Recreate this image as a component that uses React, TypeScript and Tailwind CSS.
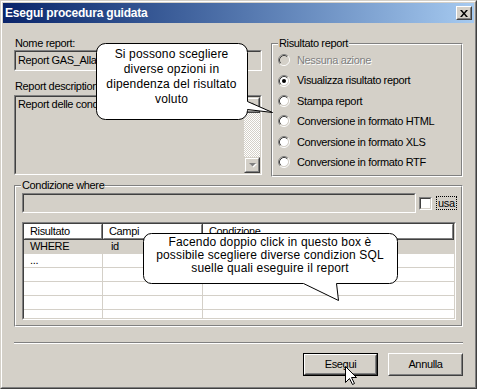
import React from 'react';

function Radio({ checked, disabled }: { checked?: boolean; disabled?: boolean }) {
  return (
    <svg width="12" height="12" viewBox="0 0 12 12" className="shrink-0">
      <circle cx="6" cy="6" r="4.2" fill={disabled ? '#d4d0c8' : '#ffffff'} />
      <path d="M2.11 9.89A5.5 5.5 0 0 1 9.89 2.11" fill="none" stroke="#808080" />
      <path d="M9.89 2.11A5.5 5.5 0 0 1 2.11 9.89" fill="none" stroke="#ffffff" />
      <path d="M2.82 9.18A4.5 4.5 0 0 1 9.18 2.82" fill="none" stroke="#404040" />
      <path d="M9.18 2.82A4.5 4.5 0 0 1 2.82 9.18" fill="none" stroke="#d4d0c8" />
      {checked && <circle cx="6" cy="6" r="2" fill="#000000" />}
    </svg>
  );
}

function ScrollArrow({ up }: { up?: boolean }) {
  return (
    <div className="h-[16px] w-[16px] border border-t-[#d4d0c8] border-l-[#d4d0c8] border-b-[#404040] border-r-[#404040]">
      <div className="flex h-full w-full items-center justify-center border border-t-white border-l-white border-b-[#808080] border-r-[#808080] bg-[#d4d0c8]">
        <svg width="9" height="6" viewBox="0 0 9 6">
          {up ? (
            <>
              <path d="M2 5h7L5.5 1.5z" fill="#ffffff" />
              <path d="M1 4h7L4.5 0.5z" fill="#808080" />
            </>
          ) : (
            <>
              <path d="M2 2h7L5.5 5.5z" fill="#ffffff" />
              <path d="M1 1h7L4.5 4.5z" fill="#808080" />
            </>
          )}
        </svg>
      </div>
    </div>
  );
}

function GroupBox({ title, className, children }: { title: string; className: string; children: React.ReactNode }) {
  return (
    <div className={`relative border border-t-[#808080] border-l-[#808080] border-b-white border-r-white ${className}`}>
      <div className="h-full w-full border border-t-white border-l-white border-b-[#808080] border-r-[#808080]">
        {children}
      </div>
      <span className="absolute left-[6px] top-[-7px] bg-[#d4d0c8] px-[1px] leading-[13px]">{title}</span>
    </div>
  );
}

function Button({ label, isDefault }: { label: string; isDefault?: boolean }) {
  return (
    <div className={`h-[23px] w-[75px] ${isDefault ? 'border border-black' : ''}`}>
      <div className="h-full w-full border border-t-white border-l-white border-b-[#404040] border-r-[#404040]">
        <div className="flex h-full w-full items-center justify-center border border-t-[#d4d0c8] border-l-[#d4d0c8] border-b-[#808080] border-r-[#808080]">
          {label}
        </div>
      </div>
    </div>
  );
}

function HeaderCell({ label, w }: { label: string; w: string }) {
  return (
    <div className={`h-[16px] ${w} border-b border-r border-b-[#404040] border-r-[#404040]`}>
      <div className="h-full w-full border border-t-white border-l-white border-b-[#808080] border-r-[#808080] pl-[5px] leading-[13px]">
        {label}
      </div>
    </div>
  );
}

const rows = [
  { a: 'WHERE', b: 'id', c: '', gray: true },
  { a: '...', b: '', c: '' },
  { a: '', b: '', c: '' },
  { a: '', b: '', c: '' },
  { a: '', b: '', c: '' },
  { a: '', b: '', c: '' },
];

const options = [
  { label: 'Nessuna azione', disabled: true },
  { label: 'Visualizza risultato report', checked: true },
  { label: 'Stampa report' },
  { label: 'Conversione in formato HTML' },
  { label: 'Conversione in formato XLS' },
  { label: 'Conversione in formato RTF' },
];

export default function App() {
  return (
    <div className="relative h-[389px] w-[477px] overflow-hidden border border-t-[#d4d0c8] border-l-[#d4d0c8] border-b-[#404040] border-r-[#404040] font-['Liberation_Sans',Arial,sans-serif] text-[11px] tracking-[-0.35px] text-black">
      <div className="flex h-full flex-col border border-t-white border-l-white border-b-[#808080] border-r-[#808080] bg-[#d4d0c8] p-[1px]">
        {/* title bar */}
        <div className="flex h-[20px] shrink-0 items-center justify-between bg-gradient-to-r from-[#0a246a] to-[#a6caf0] pl-[2px] pr-[2px]">
          <span className="text-[12px] font-bold tracking-[-0.2px] text-white">Esegui procedura guidata</span>
          <div className="h-[14px] w-[16px] border border-t-white border-l-white border-b-[#404040] border-r-[#404040]">
            <div className="flex h-full w-full items-center justify-center border border-t-[#d4d0c8] border-l-[#d4d0c8] border-b-[#808080] border-r-[#808080] bg-[#d4d0c8]">
              <svg width="8" height="7" viewBox="0 0 8 7">
                <path d="M0 0h2l2 2.5L6 0h2L5 3.5 8 7H6L4 4.5 2 7H0l3-3.5z" fill="#000000" />
              </svg>
            </div>
          </div>
        </div>

        {/* body */}
        <div className="flex flex-1 flex-col px-[11px] pt-[14px]">
          <div className="flex items-start gap-[9px]">
            <div className="flex w-[248px] flex-col">
              <div className="h-[13px] pl-[1px] leading-[13px]">Nome report:</div>
              <div className="h-[21px] border border-t-[#808080] border-l-[#808080] border-b-white border-r-white">
                <div className="flex h-full items-center overflow-hidden whitespace-nowrap border border-t-[#404040] border-l-[#404040] border-b-[#d4d0c8] border-r-[#d4d0c8] pl-[2px]">
                  Report GAS_Allarmi
                </div>
              </div>
              <div className="mt-[9px] h-[13px] pl-[1px] leading-[13px]">Report description</div>
              <div className="mt-[2px] h-[80px] border border-t-[#808080] border-l-[#808080] border-b-white border-r-white">
                <div className="flex h-full border border-t-[#404040] border-l-[#404040] border-b-[#d4d0c8] border-r-[#d4d0c8]">
                  <div className="flex-1 overflow-hidden whitespace-nowrap pl-[2px] pt-[1px] leading-[13px]">
                    Report delle condizioni di allarme
                  </div>
                  <div className="flex w-[16px] flex-col">
                    <ScrollArrow up />
                    <div className="flex-1 [background-image:repeating-conic-gradient(#d4d0c8_0_25%,#ffffff_0_50%)] [background-size:2px_2px]" />
                    <ScrollArrow />
                  </div>
                </div>
              </div>
            </div>

            <GroupBox title="Risultato report" className="mt-[6px] h-[134px] w-[192px]">
              <div className="flex flex-col pl-[5px] pt-[5px]">
                {options.map((o) => (
                  <div key={o.label} className="flex h-[20.4px] items-center gap-[7px]">
                    <Radio checked={o.checked} disabled={o.disabled} />
                    <span
                      className={
                        o.disabled ? 'text-[#808080] [text-shadow:1px_1px_0_#ffffff]' : ''
                      }
                    >
                      {o.label}
                    </span>
                  </div>
                ))}
              </div>
            </GroupBox>
          </div>

          <GroupBox title="Condizione where" className="mt-[8px] h-[142px] w-full">
            <div className="flex flex-col pl-[6px] pt-[6px]">
              <div className="flex items-center">
                <div className="h-[20px] w-[394px] border border-t-[#808080] border-l-[#808080] border-b-white border-r-white">
                  <div className="h-full border border-t-[#404040] border-l-[#404040] border-b-[#d4d0c8] border-r-[#d4d0c8]" />
                </div>
                <div className="ml-[3px] h-[13px] w-[13px] border border-t-[#808080] border-l-[#808080] border-b-white border-r-white">
                  <div className="h-full border border-t-[#404040] border-l-[#404040] border-b-[#d4d0c8] border-r-[#d4d0c8] bg-white" />
                </div>
                <div className="ml-[4px] flex h-[14px] items-center border border-dotted border-black px-[1px]">usa</div>
              </div>

              <div className="mt-[9px] h-[98px] w-[434px] border border-t-[#808080] border-l-[#808080] border-b-white border-r-white">
                <div className="h-full overflow-hidden border border-t-[#404040] border-l-[#404040] border-b-[#d4d0c8] border-r-[#d4d0c8] bg-white">
                  <div className="flex">
                    <HeaderCell label="Risultato" w="w-[79px]" />
                    <HeaderCell label="Campi" w="w-[100px]" />
                    <HeaderCell label="Condizione" w="w-[251px]" />
                  </div>
                  {rows.map((r, i) => (
                    <div key={i} className={`flex h-[14px] border-b border-[#d4d0c8] leading-[13px] ${r.gray ? 'bg-[#d4d0c8]' : ''}`}>
                      <div className="w-[79px] border-r border-[#d4d0c8] pl-[6px]">{r.a}</div>
                      <div className="w-[100px] border-r border-[#d4d0c8] pl-[8px]">{r.b}</div>
                      <div className="flex-1 pl-[6px]">{r.c}</div>
                    </div>
                  ))}
                </div>
              </div>
            </div>
          </GroupBox>

          <div className="mt-[15px] h-[2px] border-t border-b border-t-[#808080] border-b-white" />

          <div className="mt-[9px] flex justify-end gap-[10px]">
            <Button label="Esegui" isDefault />
            <Button label="Annulla" />
          </div>
        </div>
      </div>

      {/* callout 1 */}
      <svg className="absolute left-[94px] top-[41px]" width="180" height="80" viewBox="0 0 180 80">
        <path
          d="M10.5 1.5H143.5A9 9 0 0 1 152.5 10.5V59.5L177.5 70.5L152.5 67.5V68.5A9 9 0 0 1 143.5 77.5H10.5A9 9 0 0 1 1.5 68.5V10.5A9 9 0 0 1 10.5 1.5Z"
          fill="#ffffff"
          stroke="#000000"
        />
      </svg>
      <div className="absolute left-[95px] top-[42px] w-[151px] pt-[4px] text-center text-[12px] leading-[15px] tracking-[0.15px]">
        Si possono scegliere
        <br />
        diverse opzioni in
        <br />
        dipendenza del risultato
        <br />
        voluto
      </div>

      {/* callout 2 */}
      <svg className="absolute left-[141px] top-[231px]" width="258" height="70" viewBox="0 0 258 70">
        <path
          d="M9.5 1.5H247.5A8 8 0 0 1 255.5 9.5V43.5A8 8 0 0 1 247.5 51.5H194.5L196.5 68.5L161.5 51.5H9.5A8 8 0 0 1 1.5 43.5V9.5A8 8 0 0 1 9.5 1.5Z"
          fill="#ffffff"
          stroke="#000000"
        />
      </svg>
      <div className="absolute left-[142px] top-[232px] w-[254px] pt-[3px] text-center text-[12px] leading-[13px] tracking-[0.15px]">
        Facendo doppio click in questo box è
        <br />
        possibile scegliere diverse condizion SQL
        <br />
        suelle quali eseguire il report
      </div>

      {/* mouse pointer */}
      <svg className="absolute left-[344px] top-[365px]" width="13" height="20" viewBox="0 0 13 20">
        <path d="M0.5 0.5V16.5L4.5 12.5L7.5 18.5L9.5 17.5L6.5 11.5H11.5Z" fill="#ffffff" stroke="#000000" />
      </svg>
    </div>
  );
}
